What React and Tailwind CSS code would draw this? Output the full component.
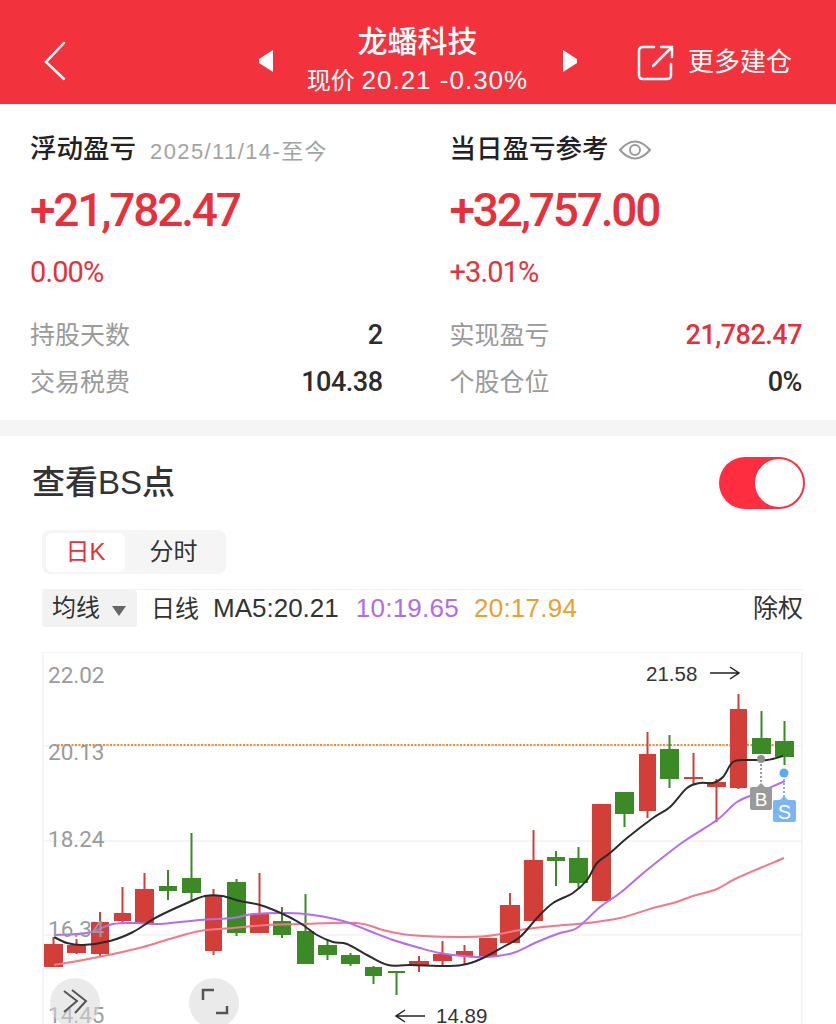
const sans = 'font-["Liberation_Sans","Noto_Sans_CJK_SC",sans-serif]'

const candles = [
  [44, 63, 944, 967, 937, 967, 'r'],
  [67, 86, 945, 953, 939, 954, 'r'],
  [91, 109, 922, 954, 912, 956, 'r'],
  [114, 131, 913, 921, 887, 923, 'r'],
  [135, 154, 889, 923, 873, 923, 'r'],
  [159, 177, 886, 891, 870, 900, 'g'],
  [182, 201, 878, 893, 833, 902, 'g'],
  [205, 222, 896, 951, 889, 955, 'r'],
  [227, 246, 882, 933, 879, 936, 'g'],
  [250, 269, 914, 933, 873, 933, 'r'],
  [273, 291, 921, 935, 907, 938, 'g'],
  [297, 314, 931, 964, 894, 964, 'g'],
  [318, 337, 945, 955, 940, 960, 'g'],
  [341, 360, 955, 964, 953, 966, 'g'],
  [365, 382, 967, 976, 966, 984, 'g'],
  [388, 405, 971, 973, 971, 995, 'g'],
  [409, 429, 961, 965, 956, 972, 'r'],
  [433, 452, 954, 961, 941, 965, 'r'],
  [456, 473, 951, 956, 945, 965, 'r'],
  [479, 497, 938, 956, 938, 956, 'r'],
  [500, 520, 905, 943, 893, 943, 'r'],
  [524, 543, 860, 921, 830, 921, 'r'],
  [547, 565, 857, 861, 851, 886, 'g'],
  [569, 588, 858, 883, 847, 889, 'g'],
  [592, 611, 804, 901, 804, 901, 'r'],
  [615, 634, 792, 814, 792, 827, 'g'],
  [639, 656, 754, 811, 732, 818, 'r'],
  [660, 679, 749, 779, 735, 788, 'g'],
  [684, 703, 777, 779, 753, 785, 'r'],
  [707, 726, 782, 787, 779, 822, 'r'],
  [730, 747, 709, 788, 694, 789, 'r'],
  [752, 771, 738, 754, 711, 754, 'g'],
  [775, 794, 741, 757, 721, 765, 'g'],
]

const ma5 = '54,937 67,943 83,945 110,941 133,932 157,917 187,903 205,896 222,896 240,901 260,905 283,914 300,923 317,935 333,942 347,944 367,955 388,965 410,965 450,966 467,964 483,958 503,947 520,937 537,918 553,903 573,893 587,880 597,863 610,853 627,838 653,818 670,807 687,788 700,783 713,783 723,777 733,762 747,760 767,760 783,756'
const ma10 = '54,935 87,933 113,924 137,923 160,924 200,920 233,918 253,914 287,913 313,915 343,921 367,930 393,940 420,948 440,953 463,956 487,957 513,953 537,942 560,933 577,928 600,907 620,893 647,870 683,842 717,820 737,802 760,792 785,781'
const ma20 = '54,965 83,960 113,954 143,947 173,938 200,931 233,928 267,925 300,924 357,923 383,930 410,935 453,937 487,936 520,930 553,926 587,923 620,918 653,908 673,903 693,896 717,889 737,878 784,858'

// catmull-rom through the points so the averages don't look faceted
function smooth(str) {
  const p = str.split(' ').map((s) => s.split(',').map(Number))
  let d = `M${p[0][0]} ${p[0][1]}`
  for (let i = 0; i < p.length - 1; i++) {
    const a = p[i - 1] || p[i]
    const b = p[i]
    const c = p[i + 1]
    const e = p[i + 2] || c
    d += `C${b[0] + (c[0] - a[0]) / 6} ${b[1] + (c[1] - a[1]) / 6} ${c[0] - (e[0] - b[0]) / 6} ${c[1] - (e[1] - b[1]) / 6} ${c[0]} ${c[1]}`
  }
  return d
}

const axis = [['22.02', 683], ['20.13', 760], ['18.24', 847], ['16.34', 937], ['14.45', 1023]]

function Chart() {
  return (
    <svg viewBox="0 652 836 372" className="block w-[836px] h-[372px]">
      <g stroke="#f2f2f2" strokeWidth="1.5" fill="none">
        <path d="M43 652H802V1024" />
        <path d="M43 652V1024" />
        <path d="M43 746H802M43 841H802M43 935H802" />
      </g>
      <path d="M54 745H785" stroke="#f58a2c" strokeWidth="2" strokeDasharray="2 1.5" />
      {candles.map(([x1, x2, top, bottom, hi, lo, c]) => {
        const color = c === 'r' ? '#d33f38' : '#3b8a26'
        return (
          <g key={x1} fill={color}>
            <rect x={(x1 + x2) / 2 - 1} y={hi} width="2" height={lo - hi} />
            <rect x={x1} y={top} width={x2 - x1} height={bottom - top} />
          </g>
        )
      })}
      <path d={smooth(ma20)} fill="none" stroke="#f4778a" strokeWidth="2" />
      <path d={smooth(ma10)} fill="none" stroke="#b56cf0" strokeWidth="2" />
      <path d={smooth(ma5)} fill="none" stroke="#2b2b2b" strokeWidth="2" />
      {axis.map(([t, y]) => (
        <text key={t} x="48" y={y} fill="#9b9b9b" fontSize="22.5" fontFamily="Roboto, sans-serif">{t}</text>
      ))}

      <text x="646" y="681" fill="#333" fontSize="20.5" fontFamily="Liberation Sans, sans-serif">21.58</text>
      <path d="M710 673H738M730 667L739 673L730 679" fill="none" stroke="#222" strokeWidth="1.5" />
      <text x="436" y="1023" fill="#333" fontSize="20.5" fontFamily="Liberation Sans, sans-serif">14.89</text>
      <path d="M425 1016H397M405 1010L396 1016L405 1022" fill="none" stroke="#222" strokeWidth="1.5" />

      <circle cx="761" cy="759" r="4" fill="#8f8f8f" />
      <path d="M761 764V784" stroke="#9b9b9b" strokeWidth="2" strokeDasharray="2 2" />
      <path d="M752 787H757L761 783L765 787H770Q772 787 772 789V808Q772 810 770 810H752Q750 810 750 808V789Q750 787 752 787Z" fill="#9a9a9a" />
      <text x="761" y="806" textAnchor="middle" fill="#fff" fontSize="19" fontFamily="Liberation Sans, sans-serif">B</text>
      <circle cx="784" cy="773" r="4.5" fill="#5ea8f7" />
      <path d="M784 779V797" stroke="#7ab6f7" strokeWidth="2" strokeDasharray="2 2" />
      <path d="M775 800H780L784 796L788 800H794Q796 800 796 802V820Q796 822 794 822H775Q773 822 773 820V802Q773 800 775 800Z" fill="#7ab6f7" />
      <text x="784.5" y="819" textAnchor="middle" fill="#fff" fontSize="20" fontFamily="Liberation Sans, sans-serif">S</text>

      <circle cx="75" cy="1003" r="25" fill="#d9d9d9" fillOpacity="0.55" />
      <path d="M64 991L77 1001L64 1012M72 990L86 1001L75 1013" fill="none" stroke="#555" strokeWidth="2" />
      <circle cx="214" cy="1003" r="25" fill="#d9d9d9" fillOpacity="0.55" />
      <path d="M203 1000V990H214M227 1006V1013H216" fill="none" stroke="#555" strokeWidth="2.5" />
    </svg>
  )
}

function Stat({ label, value, red }) {
  return (
    <div className="flex items-center justify-between h-[47px]">
      <span className="text-[25px] text-[#9a9a9a]">{label}</span>
      <span className={`font-["Roboto",sans-serif] font-medium text-[27px] tracking-[-0.5px] ${red ? 'text-[#e5303a]' : 'text-[#2c2c2c]'}`}>{value}</span>
    </div>
  )
}

function Summary({ title, extra, big, pct, rows }) {
  return (
    <div>
      <div className="flex items-center h-[40px] gap-[14px]">
        <span className="text-[26.5px] font-medium text-[#222] whitespace-nowrap">{title}</span>
        {extra}
      </div>
      <div className='font-["Roboto",sans-serif] font-medium text-[46px] leading-[60px] tracking-[-2.2px] text-[#e8303a] mt-[10px]'>{big}</div>
      <div className='font-["Roboto",sans-serif] text-[29px] leading-[40px] tracking-[-0.9px] text-[#e8303a] mt-[12px]'>{pct}</div>
      <div className="mt-[20px]">
        {rows.map((r) => (
          <Stat key={r.label} {...r} />
        ))}
      </div>
    </div>
  )
}

export default function App() {
  return (
    <div className={`w-[836px] h-[1024px] overflow-hidden bg-white ${sans}`}>
      {/* header */}
      <header className="h-[104px] bg-[#f2323c] text-white grid grid-cols-[1fr_320px_1fr] items-center pt-[18px] pl-[43px] pr-[44px]">
        <svg width="24" height="40" viewBox="0 0 24 40" fill="none" stroke="#fff" strokeWidth="2.5" strokeLinecap="round">
          <path d="M21 2L3 21L21 38" />
        </svg>
        <div className="flex items-center justify-between">
          <svg width="16" height="24" viewBox="0 0 16 24" fill="#fff"><path d="M15 1V23L1 14V10Z" /></svg>
          <div className="text-center">
            <div className="text-[30px] leading-[38px] font-medium">龙蟠科技</div>
            <div className="text-[24px] leading-[38px] whitespace-nowrap">现价 <span className="text-[26px] tracking-[1px]">20.21 -0.30%</span></div>
          </div>
          <svg width="16" height="24" viewBox="0 0 16 24" fill="#fff"><path d="M1 1V23L15 14V10Z" /></svg>
        </div>
        <div className="flex items-center justify-end gap-[13px] pt-[3px]">
          <svg width="38" height="38" viewBox="0 0 38 38" fill="none" stroke="#fff" strokeWidth="2.5" strokeLinecap="round">
            <path d="M17 3H6Q2 3 2 7V31Q2 35 6 35H30Q34 35 34 31V20" />
            <path d="M16 22L35 3M24 3H35V13" />
          </svg>
          <span className="text-[26px] whitespace-nowrap">更多建仓</span>
        </div>
      </header>

      {/* summary */}
      <section className="h-[316px] pt-[26px] pl-[30px] pr-[34px] grid grid-cols-2 gap-[67px]">
        <Summary
          title="浮动盈亏"
          extra={<span className="text-[22px] tracking-[1.4px] text-[#a3a3a3] whitespace-nowrap mt-[2px]">2025/11/14-至今</span>}
          big="+21,782.47"
          pct="0.00%"
          rows={[
            { label: '持股天数', value: '2' },
            { label: '交易税费', value: '104.38' },
          ]}
        />
        <Summary
          title="当日盈亏参考"
          extra={
            <svg width="34" height="24" viewBox="0 0 34 24" fill="none" stroke="#9a9a9a" strokeWidth="2" className="-ml-[5px]">
              <path d="M2 12Q17 -5 32 12Q17 29 2 12Z" />
              <circle cx="17" cy="12" r="5" />
            </svg>
          }
          big="+32,757.00"
          pct="+3.01%"
          rows={[
            { label: '实现盈亏', value: '21,782.47', red: true },
            { label: '个股仓位', value: '0%' },
          ]}
        />
      </section>

      <div className="h-[16px] bg-[#f5f5f5]" />

      {/* BS points */}
      <section>
        <div className="flex items-center justify-between pl-[32px] pr-[31px] pt-[21px]">
          <span className="text-[33px] leading-[52px] font-medium text-[#333]">查看BS点</span>
          <div className="w-[86px] h-[52px] rounded-full bg-[#fe2d3f] flex items-center justify-end pr-[2px]">
            <div className="w-[48px] h-[48px] rounded-full bg-white" />
          </div>
        </div>

        <div className="mx-[42px] mt-[21px] w-[184px] h-[44px] rounded-[8px] bg-[#f5f5f5] flex items-center px-[4px] text-[24px]">
          <span className="w-[79px] h-[39px] rounded-[6px] bg-white text-[#e8303a] flex items-center justify-center">日K</span>
          <span className="flex-1 text-center text-[#333]">分时</span>
        </div>

        <div className="mx-[42px] w-[761px] mt-[15px] border-t border-[#f3f3f3] flex items-center text-[25px] text-[#333] h-[38px]">
          <div className="w-[95px] h-[37px] bg-[#f2f2f2] rounded-[3px] flex items-center pl-[10px] gap-[12px] text-[24px]">
            <span className="-mt-[2px]">均线</span>
            <svg width="14" height="10" viewBox="0 0 14 10" fill="#666" className="mt-[4px]"><path d="M0 0H14L7 10Z" /></svg>
          </div>
          <span className="ml-[14px] text-[24px]">日线</span>
          <span className="ml-[14px] text-[26px]">MA5:20.21</span>
          <span className="ml-[17px] text-[26px] tracking-[0.25px] text-[#b06ced]">10:19.65</span>
          <span className="ml-[15px] text-[26px] tracking-[0.25px] text-[#e8a22c]">20:17.94</span>
          <span className="ml-auto">除权</span>
        </div>

        <div className="mt-[25px]">
          <Chart />
        </div>
      </section>
    </div>
  )
}
